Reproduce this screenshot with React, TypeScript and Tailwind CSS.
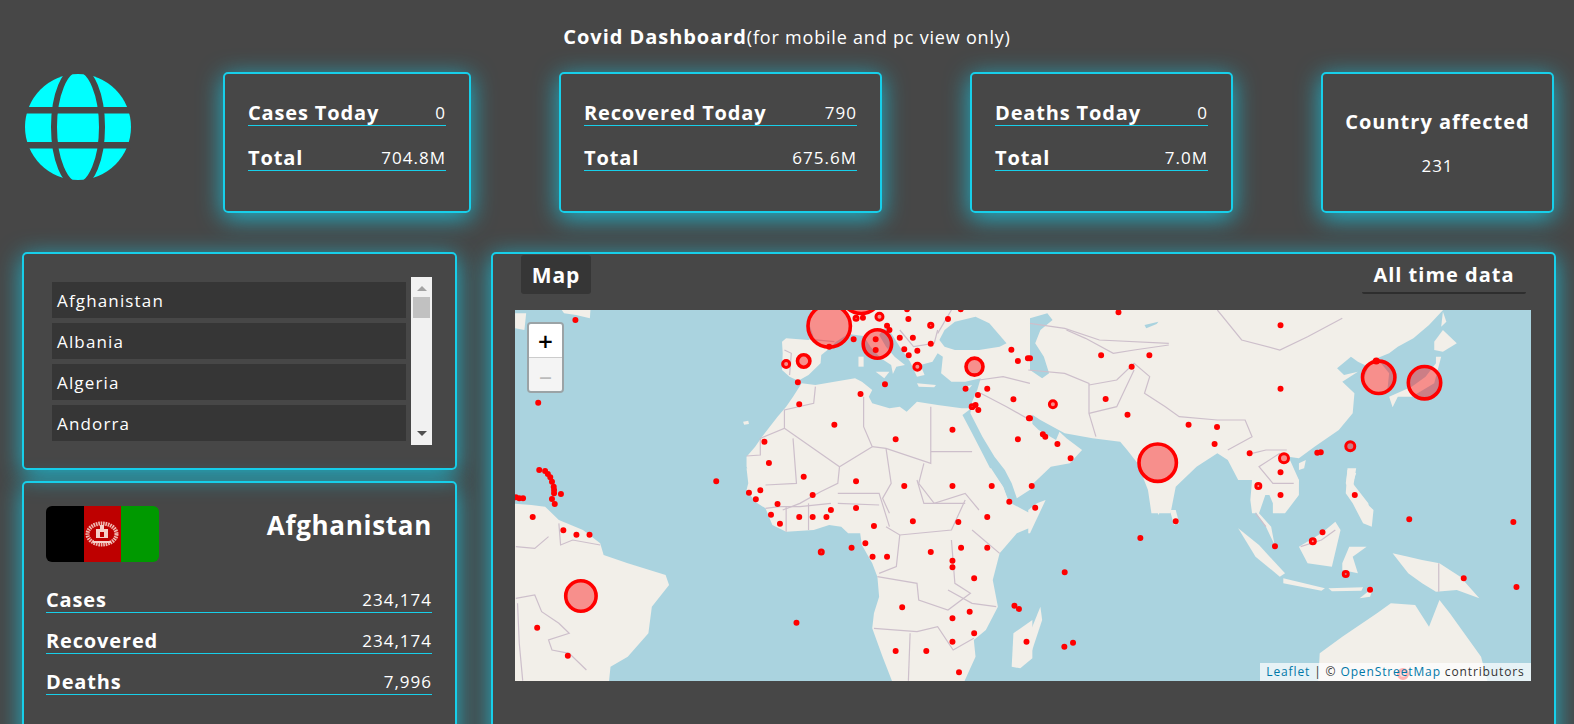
type Dot = [number, number, number?];

type Quadrant = {
  ox: number;
  oy: number;
  sx: number;
  land: string[];
  water: string[];
  borders: string[];
  dots: Dot[];
};

// traced by hand from the map, each quadrant keeps its own coordinates
const quadrants: Quadrant[] = [
  {
    ox: 490,
    oy: 250,
    sx: 2.904,
    land: [
      "73,190 105,190 100,240 73,235",
      "205,175 292,175 290,205 250,195 215,190",
      "935,175 928,225 940,262 925,270 860,265 848,275 850,310 848,360 870,380 895,392 925,375 960,340 962,315 990,292 1005,275 1040,252 1085,258 1105,290 1135,325 1165,345 1170,372 1180,350 1205,345 1175,320 1150,290 1130,255 1145,235 1165,250 1190,290 1220,335 1240,380 1262,375 1250,345 1285,335 1300,310 1315,320 1310,370 1340,395 1380,395 1425,385 1415,420 1400,455 1395,490 1430,560 1465,620 1495,660 1515,700 1530,745 1575,715 1575,175",
      "1398,475 1370,475 1300,465 1240,455 1210,485 1190,470 1160,475 1110,460 1100,440 1110,420 1080,395 1060,385 1000,395 945,405 905,400 880,440 860,470 835,500 790,560 770,590 745,620 745,650 760,685 752,715 775,735 800,760 835,790 1510,790 1505,750 1490,710 1455,660 1430,610 1400,550 1372,495",
      "1120,365 1160,365 1145,385",
      "1070,320 1085,320 1085,350 1070,350",
      "1240,400 1295,405 1290,412 1245,410",
      "1370,412 1400,405 1390,418",
      "735,515 750,512 752,522 738,524",
    ],
    water: [
      "1320,240 1350,215 1410,200 1450,220 1500,280 1480,290 1420,300 1350,300 1320,290 1305,270",
    ],
    borders: [
      "745,618 785,615 785,565 855,535 855,480 940,460 945,410",
      "855,535 1015,650 1110,590 1085,530 1085,440",
      "1110,590 1150,595 1280,640 1280,470",
      "1280,605 1400,605",
      "880,565 890,700 800,705",
      "1015,650 1010,700 960,725 900,760 850,780",
      "1150,595 1165,700 1140,745 1160,790",
      "1260,640 1245,700 1290,760 1380,730 1420,780",
      "1010,760 1130,765",
      "1420,390 1490,380 1568,400",
      "1425,430 1500,470 1568,510",
      "1190,240 1230,290 1290,280 1300,240",
      "1340,180 1300,250",
      "855,300 875,310 870,375",
      "930,268 1000,275",
    ],
    dots: [
      [248, 210], [140, 458], [1063, 205, 3.5], [1083, 203], [1215, 207], [1280, 226, 3.6], [1330, 207],
      [1153, 227], [1160, 240], [1056, 268], [1190, 263], [1228, 263], [1280, 281], [1203, 298], [1241, 302],
      [1216, 316], [1514, 299], [1533, 333], [1562, 325], [894, 397], [1147, 403], [1076, 432], [1381, 416],
      [1444, 416], [1417, 435], [1520, 448], [1400, 470, 3.4], [1410, 465], [1418, 480], [1565, 505], [898, 463],
      [1000, 524], [1343, 539], [1178, 568], [1533, 568], [797, 575], [810, 639], [911, 680], [1063, 694],
      [1203, 708], [1343, 708], [1457, 708], [657, 694], [785, 721], [752, 728], [772, 748], [937, 735],
      [835, 762], [1063, 774], [990, 780], [1508, 755], [1120, 268], [1120, 300], [985, 290], [1211, 178],
      [1367, 178], [143, 660], [160, 663], [168, 672], [175, 682], [180, 695], [185, 710], [186, 720], [186, 730],
      [206, 732], [180, 747], [188, 762], [75, 742], [85, 745], [96, 745],
      [860, 342, 5], [911, 333, 8], [1131, 200, 5], [1241, 350, 5], [1407, 350, 10.3], [1125, 282, 16],
      [985, 228, 23], [1078, 130, 22],
    ],
  },
  {
    ox: 1030,
    oy: 250,
    sx: 2.882,
    land: [
      "-5,175 1195,175 1150,225 1105,265 1060,290 1035,310 1000,325 1035,370 1030,420 990,430 960,390 975,350 945,335 925,320 885,355 905,375 945,365 900,395 935,430 930,490 890,540 820,590 775,625 745,620 775,690 775,735 735,790 700,790 700,760 690,735 665,735 650,790 640,790 635,750 640,690 600,690 570,630 540,610 480,650 420,710 405,790 350,790 340,720 310,640 280,600 260,575 180,565 100,550 30,510 0,490 -5,490 -5,510 25,540 75,570 85,545 105,565 150,600 115,640 60,650 -5,715",
      "1165,275 1190,240 1230,280 1190,305 1165,300",
      "1170,320 1185,320 1165,400 1100,440 1060,440 1045,472 1035,440 1100,410 1140,380 1170,340",
      "1190,185 1200,215 1185,230",
      "915,660 940,670 930,700 975,760 980,790 950,790 925,730 910,700",
      "775,640 795,630 790,655 775,660",
    ],
    water: [
      "0,205 50,190 65,210 30,240 15,280 40,320 55,370 35,385 0,360",
      "330,225 370,215 365,222 335,235",
    ],
    borders: [
      "105,240 160,265 240,310 300,300 400,285",
      "-5,360 100,370 170,400 170,490 190,560",
      "170,405 250,390 300,340 345,380 330,430 390,470 430,500 540,510 620,510 640,560 570,600",
      "170,490 250,470 300,360",
      "540,180 610,270 720,300 800,260 900,205",
      "0,220 100,235 200,270 400,280",
      "640,610 680,600 740,600",
      "720,610 660,650 700,700 760,700",
    ],
    dots: [
      [255, 187], [722, 226], [205, 316], [344, 316], [293, 350], [218, 447], [281, 494], [0, 325], [0, 505],
      [37, 553], [44, 560], [79, 582], [117, 625], [457, 524], [539, 531], [532, 582], [633, 610], [722, 416],
      [722, 667], [722, 735], [658, 708, 4], [936, 735], [828, 608], [838, 607], [5, 708], [15, 773],
      [66, 463, 5], [732, 625, 6], [923, 589, 6], [368, 638, 20.5], [1005, 382, 18], [1137, 398, 18], [998, 333, 3.6],
    ],
  },
  {
    ox: 490,
    oy: 470,
    sx: 2.904,
    land: [
      "60,100 120,105 160,110 200,150 270,180 320,220 330,255 400,280 510,315 520,345 470,410 460,490 400,560 350,590 345,640 60,640",
      "745,-5 750,40 745,60 770,95 800,115 820,165 860,185 940,180 985,165 1020,170 1040,190 1075,190 1080,225 1110,280 1125,320 1130,380 1115,430 1110,475 1140,560 1170,640 1375,640 1410,560 1405,510 1440,480 1475,410 1460,330 1480,250 1530,190 1575,170 1575,130 1568,130 1505,95 1490,50 1455,-5",
      "1515,590 1520,490 1575,450 1575,565 1540,595",
    ],
    water: [],
    borders: [
      "75,230 130,235 170,200",
      "200,160 205,225 240,210 320,225",
      "75,385 130,375 150,425 200,460 230,490 170,510 180,540 230,550 280,600",
      "80,400 85,520 95,632",
      "800,115 840,110 900,110 990,100",
      "860,185 860,110",
      "925,180 925,100",
      "1010,70 1130,70 1160,170",
      "1150,170 1190,195 1340,180 1380,90",
      "1190,195 1180,290 1130,310",
      "1125,320 1240,340 1245,390 1330,420 1395,370 1350,340 1340,210",
      "1115,475 1240,485 1300,470 1345,540 1405,505",
      "1215,632 1220,490",
      "1400,180 1480,250",
      "1470,410 1400,400 1330,360",
      "1240,30 1260,100 1380,100",
    ],
    dots: [
      [124, 141], [213, 181], [251, 194], [289, 194], [137, 473], [226, 557], [890, 458], [816, 134], [842, 161],
      [898, 141], [937, 141], [977, 141], [1115, 168], [1228, 154], [1360, 156], [1444, 141], [962, 246, 3.5],
      [1050, 233], [1090, 220], [1111, 260], [1153, 260], [1280, 246], [1368, 233], [1444, 233], [1343, 272],
      [1343, 292], [1406, 325], [1197, 412], [1393, 425], [1343, 445], [1406, 490], [1343, 515], [1178, 543],
      [1267, 543], [1362, 607], [1523, 407], [1536, 417], [1558, 515], [264, 378, 17],
    ],
  },
  {
    ox: 1030,
    oy: 470,
    sx: 2.882,
    land: [
      "330,-5 370,135 400,70 415,-5",
      "403,120 420,120 430,160 415,165",
      "640,-5 655,50 640,110 680,170 705,225 695,170 660,130 680,70 700,80 720,130 770,80 775,30 735,-5",
      "600,175 660,225 735,310 720,320 650,260",
      "775,230 840,190 880,155 895,180 870,290 800,280",
      "900,280 920,230 970,230 930,260 945,310 900,300",
      "730,325 850,355 840,362 730,340",
      "860,355 960,352 955,362 870,364",
      "950,385 990,352 980,380",
      "1045,250 1090,260 1130,270 1180,280 1240,320 1295,385 1230,360 1170,365 1130,340 1090,310",
      "830,640 835,550 900,500 1000,430 1040,400 1110,405 1150,470 1180,390 1210,430 1300,560 1320,640",
      "915,-5 940,-5 930,60 990,120 985,170 960,160 930,100 910,70",
      "-5,190 0,190 45,90 20,100 -5,120",
      "-5,500 30,410 35,450 0,560 -5,565",
    ],
    water: [],
    borders: ["1178,280 1178,365", "780,230 840,210 880,180", "650,130 680,170"],
    dots: [
      [420, 154], [318, 204], [100, 307], [99, 530], [124, 518], [843, 187], [815, 214, 4], [706, 229],
      [910, 312, 4], [980, 359], [1093, 148], [1393, 156], [1250, 325], [1402, 351], [1075, 612, 6],
    ],
  },
];

const panel = "rounded-[5px] border-2 border-[#17cfea] shadow-[0_5px_25px_rgb(23_197_224_/_0.85)]";

const countries = ["Afghanistan", "Albania", "Algeria", "Andorra"];

function StatRow({ label, value }: { label: string; value: string }) {
  return (
    <div className="flex items-end justify-between border-b border-[#17cfea] leading-none">
      <span className="text-[20px] font-bold leading-[24px] tracking-[0.85px]">{label}</span>
      <span className="text-[17px] leading-[24px] tracking-[1px]">{value}</span>
    </div>
  );
}

function StatCard({ width, rows }: { width: string; rows: [string, string][] }) {
  return (
    <div className={`${panel} ${width} flex h-[141px] flex-col gap-[20px] px-[23px] pt-[27px]`}>
      {rows.map(([label, value]) => (
        <StatRow key={label} label={label} value={value} />
      ))}
    </div>
  );
}

function GlobeIcon() {
  return (
    <svg viewBox="0 0 106 106" className="h-[106px] w-[106px] shrink-0">
      <circle cx="53" cy="53" r="53" fill="#00ffff" />
      <ellipse cx="53" cy="53" rx="24" ry="58" fill="none" stroke="#474747" strokeWidth="6" />
      <rect x="0" y="33" width="106" height="6.5" fill="#474747" />
      <rect x="0" y="68" width="106" height="6.5" fill="#474747" />
    </svg>
  );
}

function Flag() {
  return (
    <div className="relative flex h-[56px] w-[113px] overflow-hidden rounded-[6px]">
      <div className="flex-1 bg-black" />
      <div className="flex-1 bg-[#be0000]" />
      <div className="flex-1 bg-[#009900]" />
      <svg viewBox="0 0 34 26" className="absolute left-[39px] top-[15px] h-[26px] w-[34px]">
        <ellipse cx="17" cy="13" rx="14.5" ry="10.5" fill="none" stroke="#f0b8b0" strokeWidth="4" strokeDasharray="1.6 0.8" />
        <rect x="11" y="8" width="12" height="9" fill="#f6cfc8" />
        <rect x="15" y="4" width="4" height="5" fill="#f6cfc8" />
        <rect x="15" y="11" width="4" height="5" fill="#be0000" />
        <rect x="8" y="20" width="18" height="2" fill="#f6cfc8" />
      </svg>
    </div>
  );
}

function Scrollbar() {
  return (
    <div className="flex h-[168px] w-[21px] shrink-0 flex-col items-center bg-[#f1f1f1] px-[2px]">
      <svg viewBox="0 0 10 5" className="mt-[9px] h-[5px] w-[10px]">
        <path d="M5 0 L10 5 L0 5 Z" fill="#a3a3a3" />
      </svg>
      <div className="mt-[6px] h-[21px] w-full bg-[#c1c1c1]" />
      <svg viewBox="0 0 10 5" className="mt-auto mb-[9px] h-[5px] w-[10px]">
        <path d="M0 0 L10 0 L5 5 Z" fill="#505050" />
      </svg>
    </div>
  );
}

function WorldMap() {
  return (
    <svg viewBox="515 310 1016 371" className="block h-[371px] w-[1016px]">
      {quadrants.map((q) => (
        <g key={`land-${q.ox}-${q.oy}`} transform={`translate(${q.ox} ${q.oy}) scale(${1 / q.sx} ${1 / 3})`}>
          {q.land.map((points) => (
            <polygon key={points} points={points} fill="#f2efe9" />
          ))}
        </g>
      ))}
      {quadrants.map((q) => (
        <g key={`lines-${q.ox}-${q.oy}`} transform={`translate(${q.ox} ${q.oy}) scale(${1 / q.sx} ${1 / 3})`}>
          {q.water.map((points) => (
            <polygon key={points} points={points} fill="#aad3df" />
          ))}
          {q.borders.map((points) => (
            <polyline
              key={points}
              points={points}
              fill="none"
              stroke="#cdbfcb"
              strokeWidth="1.2"
              vectorEffect="non-scaling-stroke"
            />
          ))}
        </g>
      ))}
      {quadrants.map((q) =>
        q.dots.map(([x, y, outer = 3]) => {
          // the big rings carry a heavier stroke in the picture
          const stroke = outer >= 8 ? 3.6 : 3;
          return (
            <circle
              key={`${q.ox}-${q.oy}-${x}-${y}`}
              cx={q.ox + x / q.sx}
              cy={q.oy + y / 3}
              r={outer - stroke / 2}
              fill="#ff0000"
              fillOpacity="0.4"
              stroke="#ff0000"
              strokeWidth={stroke}
            />
          );
        }),
      )}
    </svg>
  );
}

export default function App() {
  return (
    <div className="h-[724px] overflow-hidden bg-[#474747] font-['Open_Sans',sans-serif] text-white">
      <h1 className="flex h-[72px] items-start justify-center pt-[22px] leading-[30px]">
        <span className="text-[20px] font-bold tracking-[0.95px]">Covid Dashboard</span>
        <span className="text-[18px] font-normal tracking-[0.8px]">(for mobile and pc view only)</span>
      </h1>

      <div className="flex items-start pl-[25px]">
        <div className="mt-[2px] mr-[92px]">
          <GlobeIcon />
        </div>
        <div className="flex gap-[88px]">
          <StatCard
            width="w-[248px]"
            rows={[
              ["Cases Today", "0"],
              ["Total", "704.8M"],
            ]}
          />
          <StatCard
            width="w-[323px]"
            rows={[
              ["Recovered Today", "790"],
              ["Total", "675.6M"],
            ]}
          />
          <StatCard
            width="w-[263px]"
            rows={[
              ["Deaths Today", "0"],
              ["Total", "7.0M"],
            ]}
          />
          <div className={`${panel} flex h-[141px] w-[233px] flex-col items-center pt-[34px]`}>
            <span className="text-[20px] font-bold leading-[28px] tracking-[1px]">Country affected</span>
            <span className="mt-[18px] text-[17px] leading-[24px] tracking-[1px]">231</span>
          </div>
        </div>
      </div>

      <div className="mt-[39px] flex gap-[34px] pl-[22px]">
        <div className="flex w-[435px] shrink-0 flex-col gap-[11px]">
          <div className={`${panel} flex h-[218px] gap-[5px] pl-[28px] pt-[23px]`}>
            <ul className="mt-[5px] flex w-[354px] flex-col gap-[5px]">
              {countries.map((name) => (
                <li key={name} className="h-[36px] bg-[#363636] pl-[5px] text-[17px] leading-[38px] tracking-[1.15px]">
                  {name}
                </li>
              ))}
            </ul>
            <Scrollbar />
          </div>

          <div className={`${panel} h-[300px] pl-[22px] pr-[23px] pt-[23px]`}>
            <div className="flex items-start justify-between">
              <Flag />
              <span className="-mt-[1px] text-[26px] font-bold leading-[40px] tracking-[0.7px]">Afghanistan</span>
            </div>
            <div className="mt-[26px] flex flex-col gap-[16px]">
              <StatRow label="Cases" value="234,174" />
              <StatRow label="Recovered" value="234,174" />
              <StatRow label="Deaths" value="7,996" />
            </div>
          </div>
        </div>

        <div className={`${panel} h-[520px] w-[1065px] shrink-0 px-[22px] pt-[1px]`}>
          <div className="flex h-[55px] items-start justify-between">
            <span className="ml-[6px] flex h-[39px] w-[70px] items-center justify-center rounded-[3px] bg-[#363636] pt-[2px] text-[21px] font-bold tracking-[0.9px]">
              Map
            </span>
            <span className="mr-[6px] flex h-[39px] w-[164px] items-center justify-center rounded-[2px] border-b-2 border-[#2e2e2e] pt-[3px] text-[20px] font-bold tracking-[1px]">
              All time data
            </span>
          </div>
          <div className="relative h-[371px] w-[1016px] overflow-hidden bg-[#aad3df]">
            <WorldMap />
            <div className="absolute left-[12px] top-[12px] w-[37px] overflow-hidden rounded-[4px] border-2 border-[#9ba3a6]">
              <div className="flex h-[34px] items-center justify-center border-b border-[#ccc] bg-white text-[26px] font-semibold leading-none text-black">
                +
              </div>
              <div className="flex h-[33px] items-center justify-center bg-[#f4f4f4] text-[26px] leading-none text-[#bbb]">
                –
              </div>
            </div>
            <div className="absolute bottom-0 right-0 flex h-[18px] w-[271px] items-center justify-center bg-white/70 text-[12px] tracking-[0.87px] text-[#333]">
              <span className="text-[#0078a8]">Leaflet</span>
              <span>&nbsp;| ©&nbsp;</span>
              <span className="text-[#0078a8]">OpenStreetMap</span>
              <span>&nbsp;contributors</span>
            </div>
          </div>
        </div>
      </div>
    </div>
  );
}
